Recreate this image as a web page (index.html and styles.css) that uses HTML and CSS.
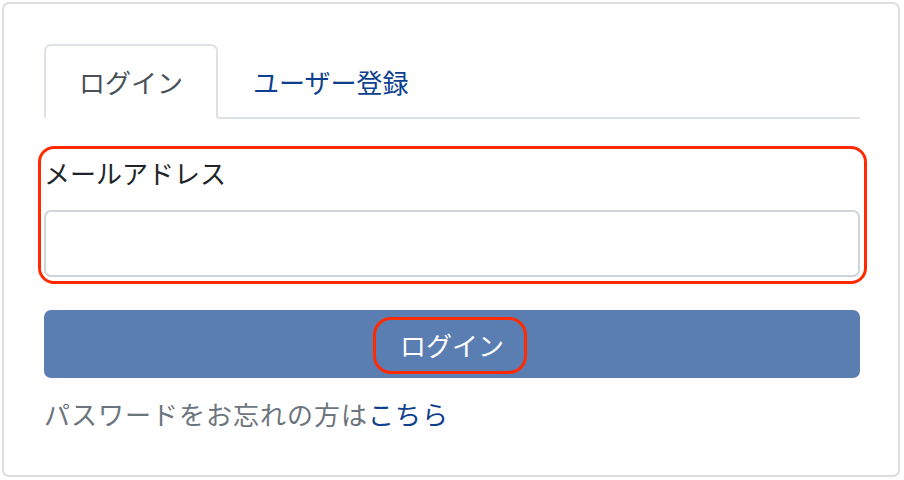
FILE: index.html
```html
<!DOCTYPE html>
<html lang="ja">
<head>
<meta charset="utf-8">
<title>ログイン</title>
<link rel="stylesheet" href="styles.css">
</head>
<body>
<div class="card">
  <ul class="tabs">
    <li><a class="tab active">ログイン</a></li>
    <li><a class="tab">ユーザー登録</a></li>
  </ul>
  <div class="group">
    <label class="label">メールアドレス</label>
    <input class="input" type="email">
    <span class="mark mark-group"></span>
  </div>
  <button class="btn"><span class="btn-text">ログイン<span class="mark mark-btn"></span></span></button>
  <p class="forgot">パスワードをお忘れの方は<a class="link">こちら</a></p>
</div>
</body>
</html>
```
FILE: styles.css
```css
* { box-sizing: border-box; }
html, body { margin: 0; padding: 0; background: #fff; }
body {
  font-family: "Noto Sans CJK JP", "Noto Sans", sans-serif;
  font-size: 26px;
  line-height: 39px;
  color: #212529;
}
.card {
  position: relative;
  margin: 2px 4px 3px 2px;
  height: 475px;
  border: 2px solid #dddddd;
  border-radius: 7px;
  padding: 40px 38px 0 40px;
}
.tabs {
  list-style: none;
  margin: 0;
  padding: 0;
  display: flex;
  border-bottom: 2px solid #dee2e6;
}
.tabs li { margin-bottom: -2px; }
.tab {
  display: block;
  padding: 16px 33px;
  border: 2px solid transparent;
  border-radius: 7px 7px 0 0;
  color: #0d3f8f;
}
.tab.active {
  color: #495057;
  border-color: #dee2e6 #dee2e6 #fff;
  background: #fff;
}
.group {
  position: relative;
  margin-top: 34px;
}
.label { display: block; margin-bottom: 18px; }
.input {
  display: block;
  width: 100%;
  height: 67px;
  border: 2px solid #ced4da;
  border-radius: 7px;
  background: #fff;
  font: inherit;
}
.btn {
  display: flex;
  justify-content: center;
  align-items: center;
  width: 100%;
  height: 68px;
  margin-top: 33px;
  border: none;
  border-radius: 7px;
  background: #5b7eb2;
  color: #fff;
  font: inherit;
  padding: 0;
}
.btn-text { position: relative; }
.forgot {
  margin: 16px 0 0;
  color: #6c757d;
  letter-spacing: 1px;
}
.link { color: #0d3f8f; }
.mark {
  position: absolute;
  border: 3px solid #ff2a00;
  pointer-events: none;
}
.mark-group {
  top: -7px; bottom: -7px; left: -6px; right: -7px;
  border-radius: 16px;
}
.mark-btn {
  top: -8px; bottom: -10px; left: -27px; right: -23px;
  border-radius: 18px;
}
```
